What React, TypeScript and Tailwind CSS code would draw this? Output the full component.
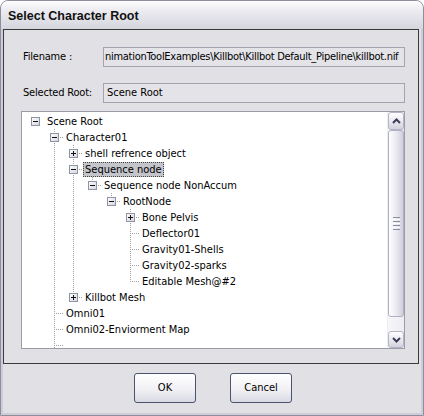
import React from "react";

type Row = {
  d: number;
  label: string;
  exp?: "m" | "p";
  next: boolean;
  anc: boolean[];
  sel?: boolean;
};

const rows: Row[] = [
  { d: 0, label: "Scene Root", exp: "m", next: false, anc: [] },
  { d: 1, label: "Character01", exp: "m", next: true, anc: [] },
  { d: 2, label: "shell refrence object", exp: "p", next: true, anc: [true] },
  { d: 2, label: "Sequence node", exp: "m", next: true, anc: [true], sel: true },
  { d: 3, label: "Sequence node NonAccum", exp: "m", next: false, anc: [true, true] },
  { d: 4, label: "RootNode", exp: "m", next: false, anc: [true, true, false] },
  { d: 5, label: "Bone Pelvis", exp: "p", next: true, anc: [true, true, false, false] },
  { d: 5, label: "Deflector01", next: true, anc: [true, true, false, false] },
  { d: 5, label: "Gravity01-Shells", next: true, anc: [true, true, false, false] },
  { d: 5, label: "Gravity02-sparks", next: true, anc: [true, true, false, false] },
  { d: 5, label: "Editable Mesh@#2", next: false, anc: [true, true, false, false] },
  { d: 2, label: "Killbot Mesh", exp: "p", next: false, anc: [true] },
  { d: 1, label: "Omni01", next: true, anc: [] },
  { d: 1, label: "Omni02-Enviorment Map", next: true, anc: [] },
  { d: 1, label: "", next: true, anc: [] },
];

const LINE = "#a0a0a0";

function Cell({
  full,
  top,
  bottom,
  horiz,
  exp,
}: {
  full?: boolean;
  top?: boolean;
  bottom?: boolean;
  horiz?: boolean;
  exp?: "m" | "p";
}) {
  return (
    <svg width={19} height={16} className="shrink-0 block" shapeRendering="crispEdges">
      {full && <line x1={9.5} y1={0} x2={9.5} y2={16} stroke={LINE} strokeDasharray="1 1" />}
      {top && <line x1={9.5} y1={0} x2={9.5} y2={8} stroke={LINE} strokeDasharray="1 1" />}
      {bottom && <line x1={9.5} y1={8} x2={9.5} y2={16} stroke={LINE} strokeDasharray="1 1" />}
      {horiz && <line x1={9} y1={8.5} x2={19} y2={8.5} stroke={LINE} strokeDasharray="1 1" />}
      {exp && (
        <g>
          <defs>
            <linearGradient id="expg" x1="0" y1="0" x2="1" y2="1">
              <stop offset="0" stopColor="#ffffff" />
              <stop offset="1" stopColor="#d4d4dc" />
            </linearGradient>
          </defs>
          <rect x={5.5} y={4.5} width={8} height={8} fill="url(#expg)" stroke="#8c94a6" />
          <line x1={7} y1={8.5} x2={12} y2={8.5} stroke="#111" />
          {exp === "p" && <line x1={9.5} y1={6} x2={9.5} y2={11} stroke="#111" />}
        </g>
      )}
    </svg>
  );
}

function TreeRow({ r }: { r: Row }) {
  const cells: React.ReactNode[] = [];
  for (let c = 0; c <= r.d; c++) {
    if (c === 0) {
      if (r.d === 0) cells.push(<Cell key={c} exp={r.exp} />);
      else cells.push(<Cell key={c} />);
    } else if (c < r.d) {
      cells.push(<Cell key={c} full={r.anc[c - 1]} />);
    } else {
      cells.push(<Cell key={c} top bottom={r.next} horiz exp={r.exp} />);
    }
  }
  return (
    <div className="flex items-center h-[16px]">
      {cells}
      {r.label && (
        <span
          className={
            r.sel
              ? "h-[15px] leading-[13px] px-[1px] border border-dotted border-[#444] bg-[#c4c4cb] whitespace-nowrap"
              : "h-[15px] leading-[15px] px-[2px] whitespace-nowrap"
          }
        >
          {r.label}
        </span>
      )}
    </div>
  );
}

function UpArrow({ down }: { down?: boolean }) {
  return (
    <svg width={9} height={6} className="block">
      <polyline
        points={down ? "1,1 4.5,4.5 8,1" : "1,5 4.5,1.5 8,5"}
        fill="none"
        stroke="#3d3d55"
        strokeWidth={2}
      />
    </svg>
  );
}

function Scrollbar() {
  return (
    <div className="w-[17px] shrink-0 flex flex-col bg-[linear-gradient(90deg,#f7f7fa,#ececf2)] border-l border-[#ededf2]">
      <div className="h-[18px] shrink-0 flex items-center justify-center rounded-[3px] border border-[#b4b4c6] bg-[linear-gradient(#ffffff,#e6e6ee_60%,#d2d2de)]">
        <UpArrow />
      </div>
      <div className="h-[187px] shrink-0 flex flex-col items-center justify-center gap-[1px] rounded-[3px] border border-[#b0b0c4] bg-[linear-gradient(90deg,#ffffff,#e8e8f0_55%,#cfcfdc)]">
        <div className="w-[7px] h-[1px] bg-[#8d8da4]" />
        <div className="w-[7px] h-[1px] bg-[#ffffff]" />
        <div className="w-[7px] h-[1px] bg-[#8d8da4]" />
        <div className="w-[7px] h-[1px] bg-[#ffffff]" />
        <div className="w-[7px] h-[1px] bg-[#8d8da4]" />
        <div className="w-[7px] h-[1px] bg-[#ffffff]" />
        <div className="w-[7px] h-[1px] bg-[#8d8da4]" />
      </div>
      <div className="flex-1" />
      <div className="h-[17px] shrink-0 flex items-center justify-center rounded-[3px] border border-[#b4b4c6] bg-[linear-gradient(#ffffff,#e6e6ee_60%,#d2d2de)]">
        <UpArrow down />
      </div>
    </div>
  );
}

export default function App() {
  return (
    <div className="w-[424px] h-[416px] bg-white font-['DejaVu_Sans_Condensed','Liberation_Sans',sans-serif] text-[11px] text-black">
      <div className="w-full h-full flex flex-col rounded-t-[8px] border border-[#8d8d9c] bg-[#e1e0e5] overflow-hidden">
        <div className="h-[28px] shrink-0 flex items-center pl-[7px] pt-[3px] bg-[linear-gradient(#fdfdfe,#ebebf0_35%,#d5d5de)] font-['Liberation_Sans',sans-serif] font-bold text-[12.5px] text-[#111]">
          Select Character Root
        </div>
        <div className="flex-1 flex flex-col border-x-2 border-b-2 border-[#cdcdd7]">
          <div className="h-[335px] w-[416px] shrink-0 border border-[#3a3a3a] pt-[17px] pl-[17px] flex flex-col">
            <div className="flex items-center h-[20px]">
              <span className="w-[82px] shrink-0 pl-[2px] tracking-[-0.2px]">Filename :</span>
              <div className="w-[302px] h-[20px] border border-[#a4a4ae] bg-[#e4e3e8] overflow-hidden whitespace-nowrap pl-[1px] leading-[18px] tracking-[-0.28px]">
                nimationToolExamples\Killbot\Killbot Default_Pipeline\killbot.nif
              </div>
            </div>
            <div className="flex items-center h-[20px] mt-[16px]">
              <span className="w-[82px] shrink-0 pl-[2px] tracking-[-0.2px]">Selected Root:</span>
              <div className="w-[302px] h-[20px] border border-[#a4a4ae] bg-[#e4e3e8] overflow-hidden whitespace-nowrap pl-[3px] leading-[18px]">
                Scene Root
              </div>
            </div>
            <div className="mt-[8px] w-[384px] h-[238px] border border-[#9c9ca8] bg-white flex">
              <div className="flex-1 pt-[1px] pl-[4px] overflow-hidden flex flex-col">
                {rows.map((r, i) => (
                  <TreeRow key={i} r={r} />
                ))}
              </div>
              <Scrollbar />
            </div>
          </div>
          <div className="flex-1 flex justify-center items-start gap-[34px] pt-[9px] pl-[2px]">
            <button className="w-[62px] h-[30px] rounded-[3px] border border-[#4a5470] bg-[linear-gradient(#ffffff,#f1f1f5_55%,#d9d9e3)] text-[11px]">
              OK
            </button>
            <button className="w-[62px] h-[30px] rounded-[3px] border border-[#4a5470] bg-[linear-gradient(#ffffff,#f1f1f5_55%,#d9d9e3)] text-[11px]">
              Cancel
            </button>
          </div>
        </div>
      </div>
    </div>
  );
}
